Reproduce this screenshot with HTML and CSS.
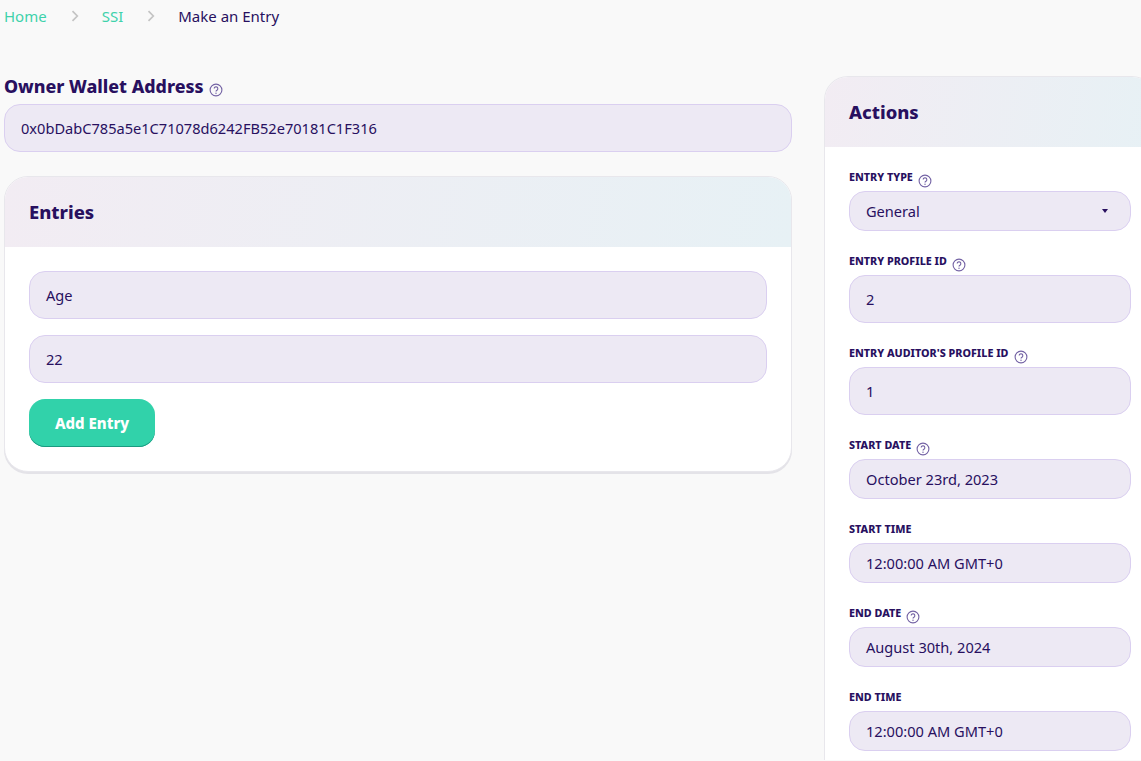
FILE: index.html
```html
<!DOCTYPE html>
<html lang="en">
<head>
<meta charset="utf-8">
<title>Make an Entry</title>
<link rel="stylesheet" href="styles.css">
</head>
<body>
<svg class="defs" width="0" height="0" aria-hidden="true">
  <symbol id="help" viewBox="0 0 14 14">
    <circle cx="7" cy="7" r="5.9" fill="none" stroke="currentColor" stroke-width="1.1"/>
    <path d="M5.2 5.6a1.8 1.8 0 1 1 2.7 1.6c-.6.35-.9.7-.9 1.4" fill="none" stroke="currentColor" stroke-width="1.1"/>
    <circle cx="7" cy="10.2" r=".7" fill="currentColor"/>
  </symbol>
  <symbol id="chev" viewBox="0 0 8 12">
    <path d="M1.5 1.2 6.3 6l-4.8 4.8" fill="none" stroke="currentColor" stroke-width="1.7"/>
  </symbol>
</svg>
<nav class="crumbs">
  <a class="crumb-link">Home</a>
  <svg class="chev"><use href="#chev"/></svg>
  <a class="crumb-link">SSI</a>
  <svg class="chev"><use href="#chev"/></svg>
  <span class="crumb-current">Make an Entry</span>
</nav>
<main class="layout">
  <section class="left">
    <div class="owner-label"><span>Owner Wallet Address</span><svg class="help"><use href="#help"/></svg></div>
    <div class="field">0x0bDabC785a5e1C71078d6242FB52e70181C1F316</div>
    <div class="card entries">
      <header class="card-head"><h2>Entries</h2></header>
      <div class="card-body stack">
        <div class="field">Age</div>
        <div class="field">22</div>
        <div><button class="btn" type="button">Add Entry</button></div>
      </div>
    </div>
  </section>
  <aside class="card actions">
    <header class="card-head"><h2>Actions</h2></header>
    <div class="card-body form">
      <div class="row">
        <div class="label"><span>ENTRY TYPE</span><svg class="help"><use href="#help"/></svg></div>
        <div class="field short select">General<span class="caret"></span></div>
      </div>
      <div class="row">
        <div class="label"><span>ENTRY PROFILE ID</span><svg class="help"><use href="#help"/></svg></div>
        <div class="field">2</div>
      </div>
      <div class="row">
        <div class="label"><span>ENTRY AUDITOR'S PROFILE ID</span><svg class="help"><use href="#help"/></svg></div>
        <div class="field">1</div>
      </div>
      <div class="row">
        <div class="label"><span>START DATE</span><svg class="help"><use href="#help"/></svg></div>
        <div class="field short">October 23rd, 2023</div>
      </div>
      <div class="row">
        <div class="label"><span>START TIME</span></div>
        <div class="field short">12:00:00 AM GMT+0</div>
      </div>
      <div class="row">
        <div class="label"><span>END DATE</span><svg class="help"><use href="#help"/></svg></div>
        <div class="field short">August 30th, 2024</div>
      </div>
      <div class="row">
        <div class="label"><span>END TIME</span></div>
        <div class="field short">12:00:00 AM GMT+0</div>
      </div>
    </div>
  </aside>
</main>
</body>
</html>
```
FILE: styles.css
```css
* { box-sizing: border-box; }
html, body { height: 100%; }
html { overflow: hidden; }
body {
  margin: 0;
  padding-left: 4px;
  width: 1141px;
  height: 761px;
  overflow: hidden;
  background: #f9f9f9;
  color: #28105f;
  font-family: "Noto Sans", sans-serif;
}
.defs { position: absolute; }
.crumbs {
  display: flex;
  align-items: center;
  height: 32px;
  font-size: 15px;
}
.crumb-link { color: #3ed2ab; }
.chev { width: 8px; height: 12px; margin: 0 23px 0 24px; color: #c4c4c4; }
.layout { display: flex; align-items: flex-start; gap: 32px; margin-top: 44px; width: 1152px; }
.left { width: 788px; flex: none; }
.owner-label {
  display: flex;
  align-items: flex-start;
  gap: 5px;
  height: 28px;
  font-size: 17.8px;
  line-height: 20px;
  font-weight: 800;
}
.owner-label .help { margin-top: 7px; }
.help { width: 14px; height: 14px; flex: none; color: #7362a4; }
.field {
  display: flex;
  align-items: center;
  height: 48px;
  padding: 0 16px;
  font-size: 14.6px;
  background: #ede9f4;
  border: 1px solid #dacff0;
  border-radius: 16px;
}
.short { height: 40px; }
.select { justify-content: space-between; padding-right: 22px; }
.caret { width: 0; height: 0; border: 3px solid transparent; border-top: 4px solid #28105f; border-bottom: 0; }
.card {
  background: #fff;
  border: 1px solid #e8e7ec;
  border-radius: 24px;
  overflow: hidden;
}
.entries { margin-top: 24px; box-shadow: 0 2px 0 #e4e3e8; }
.card-head {
  display: flex;
  align-items: center;
  height: 70px;
  padding: 0 24px 2px;
  background: linear-gradient(100deg, #f2ecf3 0%, #e7f1f5 100%);
}
.card-head h2 { margin: 0; font-size: 18.4px; font-weight: 800; }
.card-body { padding: 24px; }
.stack { display: flex; flex-direction: column; gap: 16px; }
.btn {
  display: block;
  width: 126px;
  height: 48px;
  border: 0;
  border-radius: 16px;
  background: #31d2aa;
  box-shadow: inset 0 -1px 0 #1a9a80;
  color: #fff;
  font: 800 15px "Noto Sans", sans-serif;
}
.actions { width: 332px; height: 684px; flex: none; border-bottom: 0; border-radius: 24px 24px 0 0; }
.form { display: flex; flex-direction: column; gap: 20px; }
.label {
  display: flex;
  align-items: flex-start;
  gap: 5px;
  height: 24px;
  font-size: 10.75px;
  line-height: 20px;
  font-weight: 800;
}
.label .help { margin-top: 7px; }
.form .row:first-child { margin-top: -4px; }
```
